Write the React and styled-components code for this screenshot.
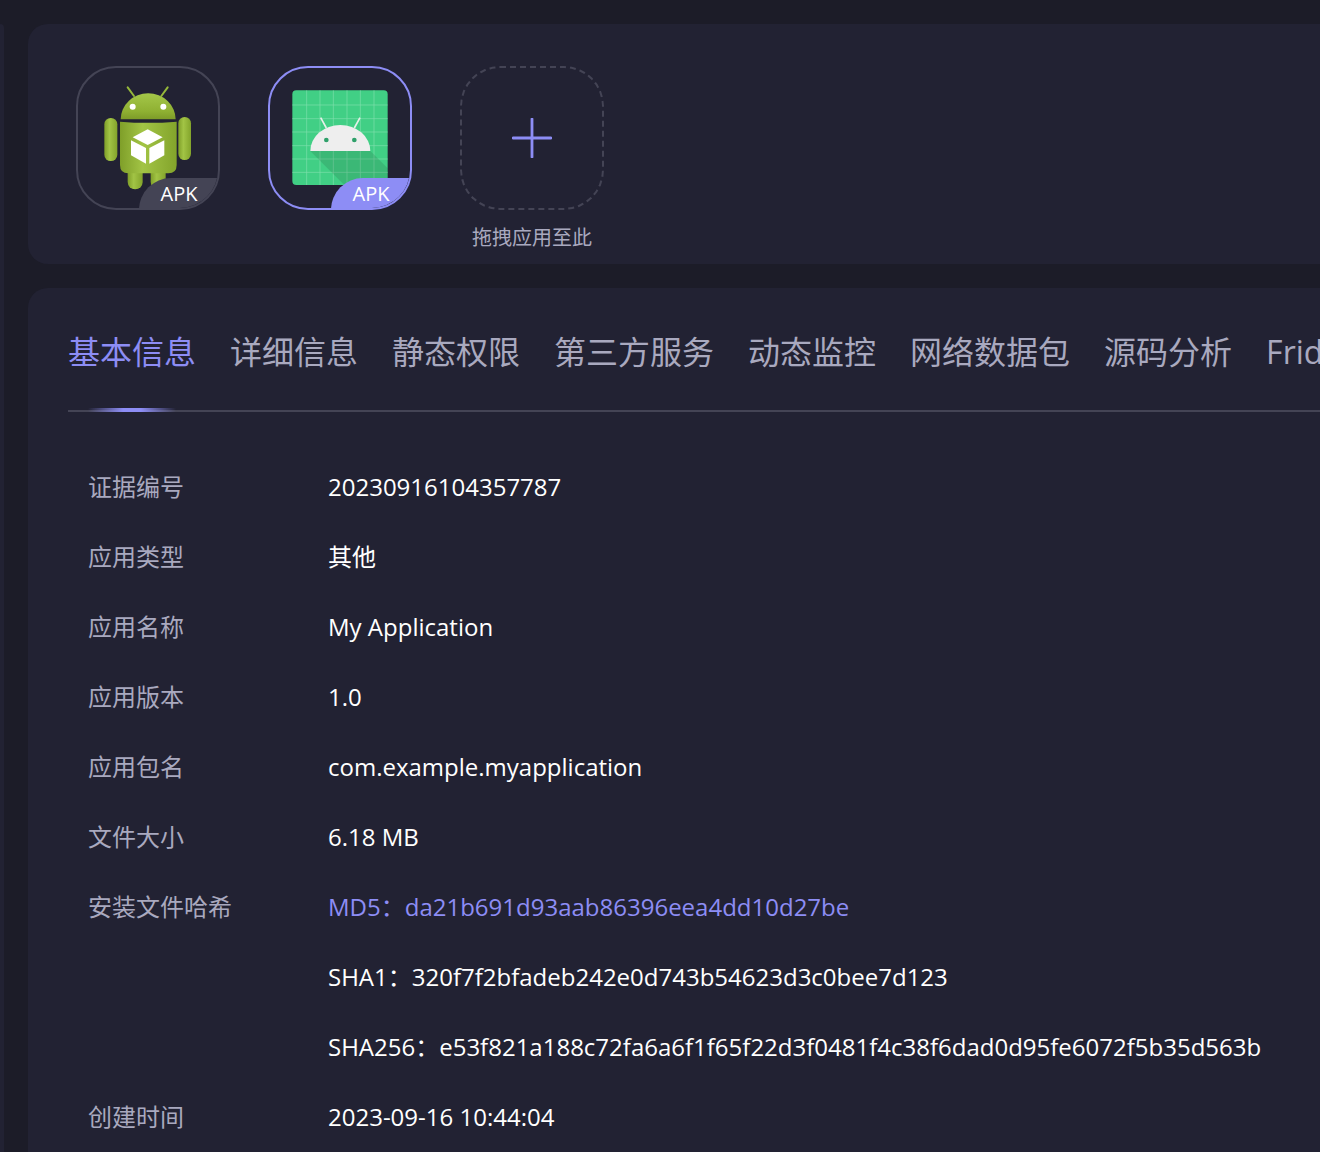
import React from "react";
import styled, { createGlobalStyle } from "styled-components";

const Global = createGlobalStyle`
  html, body { margin: 0; padding: 0; background: #1c1c28; }
  body { font-family: "Open Sans", "Noto Sans CJK SC", sans-serif; }
`;
const Page = styled.div`
  width: 1320px; height: 1152px; overflow: hidden; display: flex; background: #1c1c28;
`;
const Sidebar = styled.div`
  flex: none; width: 4px; margin-top: 24px; height: 1200px; background: #222233; border-radius: 0 8px 0 0;
`;
const Main = styled.main`
  flex: none; width: 1400px; margin-left: 24px; padding-top: 24px; display: flex; flex-direction: column; gap: 24px;
`;
const Card = styled.section`
  background: #222233; border-radius: 20px 0 0 20px;
`;
const UploadCard = styled(Card)`
  height: 240px; box-sizing: border-box; padding: 42px 48px; display: flex; gap: 48px; align-items: flex-start;
`;
const AppSlot = styled.div`
  width: 144px; display: flex; flex-direction: column; align-items: center;
`;
const AppIcon = styled.div`
  position: relative; width: 144px; height: 144px; box-sizing: border-box; border-radius: 40px; overflow: hidden;
  border: 2px solid ${p => (p.$active ? "#8d8df5" : "#444455")};
  svg { position: absolute; left: -2px; top: -2px; display: block; }
`;
const Badge = styled.span`
  position: absolute; right: -1px; bottom: -2px; width: 80px; height: 32px; display: flex; align-items: center; justify-content: center;
  font-size: 20px; line-height: 32px; color: #fff; border-radius: 32px 0 0 0;
  background: ${p => (p.$active ? "#8d8df5" : "#444455")};
`;
const DropZone = styled.div`
  width: 144px; height: 144px; box-sizing: border-box; border-radius: 40px; border: 2px dashed #444455;
  display: flex; align-items: center; justify-content: center;
`;
const DropLabel = styled.div`
  margin-top: 16px; font-size: 20px; line-height: 24px; color: #a9a9bf; white-space: nowrap;
`;
const InfoCard = styled(Card)`
  border-radius: 20px 0 0 0; padding: 40px 40px 0; height: 900px;
`;
const Tabs = styled.nav`
  position: relative; display: flex; gap: 34px; height: 82px; border-bottom: 2px solid #444455; white-space: nowrap;
`;
const Tab = styled.div`
  font-size: 32px; line-height: 48px; color: ${p => (p.$active ? "#8d8df5" : "#a9a9bf")};
`;
const Indicator = styled.div`
  position: absolute; left: 20px; bottom: -2px; width: 88px; height: 4px;
  background: linear-gradient(90deg, rgba(141,141,245,0) 0%, #8d8df5 40%, #8d8df5 60%, rgba(141,141,245,0) 100%);
`;
const Rows = styled.div`
  margin-top: 40px; padding-left: 20px;
`;
const Row = styled.div`
  display: flex; height: 70px; font-size: 24px; line-height: 70px;
`;
const Label = styled.div`
  width: 240px; flex: none; color: #a9a9bf;
`;
const Value = styled.div`
  white-space: nowrap; color: ${p => (p.$link ? "#8d8df5" : "#ffffff")};
`;

const RobotIcon = () => (
  <svg width="144" height="144" viewBox="48 48 432 432">
    <defs>
      <linearGradient id="rg" x1="0" y1="0" x2="0" y2="1">
        <stop offset="0" stopColor="#a4c749" />
        <stop offset="0.7" stopColor="#8fb032" />
        <stop offset="1" stopColor="#7d9b28" />
      </linearGradient>
      <linearGradient id="rh" x1="0" y1="0" x2="1" y2="0">
        <stop offset="0" stopColor="#7f9f29" />
        <stop offset="0.4" stopColor="#a2c445" />
        <stop offset="1" stopColor="#83a42b" />
      </linearGradient>
    </defs>
    <path d="M203 112 L222 138 M323 112 L304 138" stroke="#95b83a" strokeWidth="6" strokeLinecap="round" />
    <path d="M182 208 A82.5 78 0 0 1 347 208 Z" fill="url(#rg)" />
    <circle cx="218" cy="170" r="9" fill="#fff" />
    <circle cx="310" cy="170" r="9" fill="#fff" />
    <rect x="133" y="204" width="39" height="129" rx="19" fill="url(#rh)" />
    <rect x="355" y="201" width="38" height="129" rx="19" fill="url(#rh)" />
    <rect x="203" y="340" width="45" height="78" rx="22" fill="url(#rh)" />
    <rect x="272" y="340" width="45" height="78" rx="22" fill="url(#rh)" />
    <path d="M180 215 Q264 222 350 215 L350 345 Q350 370 325 370 L205 370 Q180 370 180 345 Z" fill="url(#rh)" />
    <path d="M263 238 L308 262 L263 285 L218 262 Z" fill="#fff" />
    <path d="M213 271 L258 294 L258 341 L213 316 Z" fill="#fff" />
    <path d="M268 294 L313 271 L313 316 L268 341 Z" fill="#fff" />
  </svg>
);

const StudioIcon = () => {
  const vs = [170, 210, 250, 291, 331, 372];
  const hs = [165, 206, 246, 287, 327, 367];
  return (
    <svg width="144" height="144" viewBox="54 48 432 432">
      <rect x="127" y="121" width="286" height="284" rx="12" fill="#41cf85" />
      {vs.map(x => <path key={x} d={`M${x} 121 V405`} stroke="#7fdfac" strokeWidth="2" />)}
      {hs.map(y => <path key={y} d={`M127 ${y} H413`} stroke="#7fdfac" strokeWidth="2" />)}
      <path d="M181 303 L283 405 L405 405 Q413 405 413 397 L413 355 L361 303 Z" fill="#1c4a30" opacity="0.17" />
      <path d="M212 203 L229 234 M330 203 L313 234" stroke="#e6efe9" strokeWidth="5" />
      <path d="M181 303 A90 78 0 0 1 361 303 Z" fill="#eeeeee" />
      <circle cx="229" cy="270" r="7" fill="#2fa06a" />
      <circle cx="313" cy="270" r="7" fill="#2fa06a" />
    </svg>
  );
};

const PlusIcon = () => (
  <svg width="40" height="40" viewBox="0 0 40 40">
    <path d="M20 1 V39 M1 20 H39" stroke="#8d8df5" strokeWidth="2.8" strokeLinecap="round" />
  </svg>
);

const tabs = ["基本信息", "详细信息", "静态权限", "第三方服务", "动态监控", "网络数据包", "源码分析", "Frida"];
const rows = [
  ["证据编号", "20230916104357787"],
  ["应用类型", "其他"],
  ["应用名称", "My Application"],
  ["应用版本", "1.0"],
  ["应用包名", "com.example.myapplication"],
  ["文件大小", "6.18 MB"],
  ["安装文件哈希", "MD5：da21b691d93aab86396eea4dd10d27be", true],
  ["", "SHA1：320f7f2bfadeb242e0d743b54623d3c0bee7d123"],
  ["", "SHA256：e53f821a188c72fa6a6f1f65f22d3f0481f4c38f6dad0d95fe6072f5b35d563b"],
  ["创建时间", "2023-09-16 10:44:04"],
];

export default function App() {
  return (
    <Page>
      <Global />
      <Sidebar />
      <Main>
        <UploadCard>
          <AppSlot>
            <AppIcon><RobotIcon /><Badge>APK</Badge></AppIcon>
          </AppSlot>
          <AppSlot>
            <AppIcon $active><StudioIcon /><Badge $active>APK</Badge></AppIcon>
          </AppSlot>
          <AppSlot>
            <DropZone><PlusIcon /></DropZone>
            <DropLabel>拖拽应用至此</DropLabel>
          </AppSlot>
        </UploadCard>
        <InfoCard>
          <Tabs>
            {tabs.map((t, i) => <Tab key={t} $active={i === 0}>{t}</Tab>)}
            <Indicator />
          </Tabs>
          <Rows>
            {rows.map(([l, v, link], i) => (
              <Row key={i}><Label>{l}</Label><Value $link={link}>{v}</Value></Row>
            ))}
          </Rows>
        </InfoCard>
      </Main>
    </Page>
  );
}
